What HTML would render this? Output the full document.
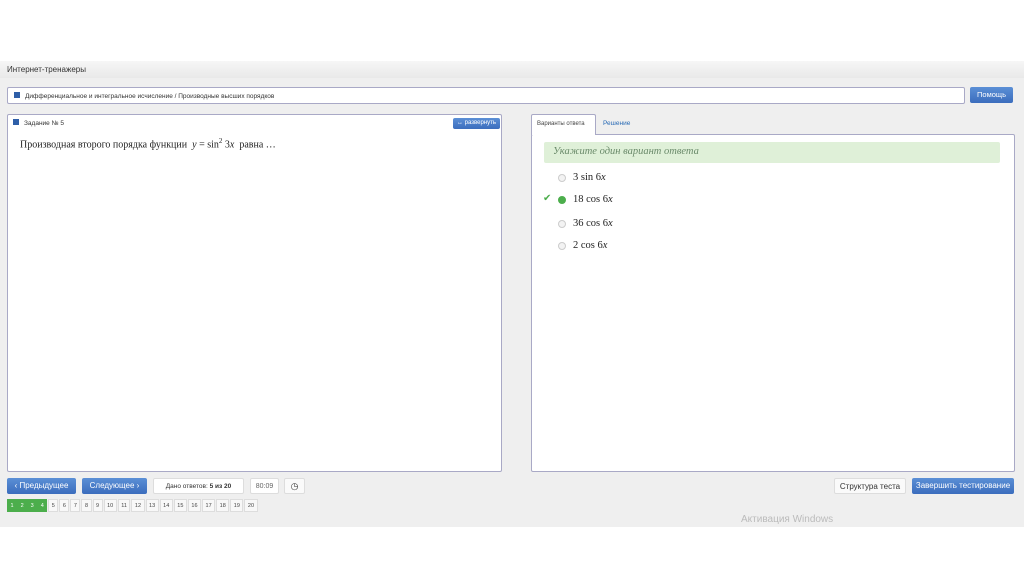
<!DOCTYPE html>
<html><head><meta charset="utf-8"><style>
*{box-sizing:border-box;margin:0;padding:0}
body{width:1024px;height:574px;background:#fff;font-family:"Liberation Sans",sans-serif;position:relative;overflow:hidden}
.gray{position:absolute;left:0;top:61px;width:1024px;height:466px;background:#efefef}
.hdr{position:absolute;left:0;top:61px;width:1024px;height:17px;background:linear-gradient(#f6f6f6,#e9e9e9);font-size:8px;color:#333;padding:4px 7px}
.box{position:absolute;background:#fff;border:1px solid #a9a9c6;border-radius:2px}
.sq{display:inline-block;width:6px;height:6px;background:#2f5fa8;margin-right:5px;vertical-align:-0px}
.btn{position:absolute;border-radius:2px;font-size:8px;color:#fff;background:linear-gradient(#5b8fd6,#3b6dbd);text-align:center;line-height:16px;white-space:nowrap}
.wbtn{position:absolute;border-radius:2px;font-size:8px;color:#333;background:#fafafa;border:1px solid #ddd;text-align:center;line-height:15px;white-space:nowrap}
.ser{font-family:"Liberation Serif",serif}
.opt{position:absolute;left:573px;font-family:"Liberation Serif",serif;font-size:10.5px;color:#222}
.rad{position:absolute;left:558px;width:8px;height:8px;border-radius:50%;border:1px solid #ccc;background:#f3f3f3}
.pg{position:absolute;top:499px;left:7px;display:flex}
.pg span{font-size:5.5px;height:13px;line-height:12px;padding:0 2.5px;border:1px solid #ddd;background:#f8f8f8;color:#444;margin-right:1px}
.pg span.g{background:#4cae4c;border-color:#4cae4c;color:#fff;margin-right:0}
</style></head><body>
<div class="gray"></div>
<div class="hdr">Интернет-тренажеры</div>
<div class="box" style="left:7px;top:87px;width:958px;height:17px;font-size:6.5px;color:#333;padding:4px 6px"><span class="sq"></span>Дифференциальное и интегральное исчисление / Производные высших порядков</div>
<div class="btn" style="left:970px;top:87px;width:43px;height:16px;font-size:7.5px">Помощь</div>
<div class="box" style="left:7px;top:114px;width:495px;height:358px;font-size:6.5px;color:#333;padding:4px 5px"><span class="sq"></span>Задание № 5
<div class="btn" style="left:445px;top:3px;width:47px;height:11px;line-height:11px;font-size:6px">↔ развернуть</div>
<div class="ser" style="position:absolute;left:12px;top:22px;font-size:10px;color:#222">Производная второго порядка функции &nbsp;<i>y</i> = sin<sup style="font-size:7px">2</sup> 3<i>x</i>&nbsp; равна …</div>
</div>
<div style="position:absolute;left:531px;top:114px;width:65px;height:21px;background:#fff;border:1px solid #a9a9c6;border-bottom:none;border-radius:2px 2px 0 0;font-size:6px;color:#444;padding:6px 5px;z-index:2;white-space:nowrap">Варианты ответа</div>
<div style="position:absolute;left:603px;top:120px;font-size:6.5px;color:#2a6bb5">Решение</div>
<div class="box" style="left:531px;top:134px;width:484px;height:338px"></div>
<div style="position:absolute;left:544px;top:142px;width:456px;height:21px;background:#dff0d8;border-radius:2px;font-family:'Liberation Serif',serif;font-style:italic;font-size:10.5px;color:#6a8a6a;padding:4px 9px">Укажите один вариант ответа</div>
<div class="rad" style="top:174px"></div><div class="opt" style="top:172px">3 sin 6<i>x</i></div>
<div style="position:absolute;left:543px;top:193px;color:#4cae4c;font-size:10px">✔</div>
<div class="rad" style="top:196px;background:#4cae4c;border-color:#4cae4c"></div><div class="opt" style="top:194px">18 cos 6<i>x</i></div>
<div class="rad" style="top:220px"></div><div class="opt" style="top:218px">36 cos 6<i>x</i></div>
<div class="rad" style="top:242px"></div><div class="opt" style="top:240px">2 cos 6<i>x</i></div>
<div class="btn" style="left:7px;top:478px;width:69px;height:16px">‹ Предыдущее</div>
<div class="btn" style="left:82px;top:478px;width:65px;height:16px">Следующее ›</div>
<div class="wbtn" style="left:153px;top:478px;width:91px;height:16px;background:#fff;font-size:6.5px">Дано ответов: <b>5 из 20</b></div>
<div class="wbtn" style="left:250px;top:478px;width:29px;height:16px;background:#fff;font-size:7px;color:#666">80:09</div>
<div class="wbtn" style="left:284px;top:478px;width:21px;height:16px;font-size:9px">◷</div>
<div class="wbtn" style="left:834px;top:478px;width:72px;height:16px">Структура теста</div>
<div class="btn" style="left:912px;top:478px;width:102px;height:16px">Завершить тестирование</div>
<div class="pg"><span class="g">1</span><span class="g">2</span><span class="g">3</span><span class="g" style="margin-right:1px">4</span><span>5</span><span>6</span><span>7</span><span>8</span><span>9</span><span>10</span><span>11</span><span>12</span><span>13</span><span>14</span><span>15</span><span>16</span><span>17</span><span>18</span><span>19</span><span>20</span></div>
<div style="position:absolute;left:741px;top:514px;font-size:10px;color:#bbb">Активация Windows</div>
</body></html>
